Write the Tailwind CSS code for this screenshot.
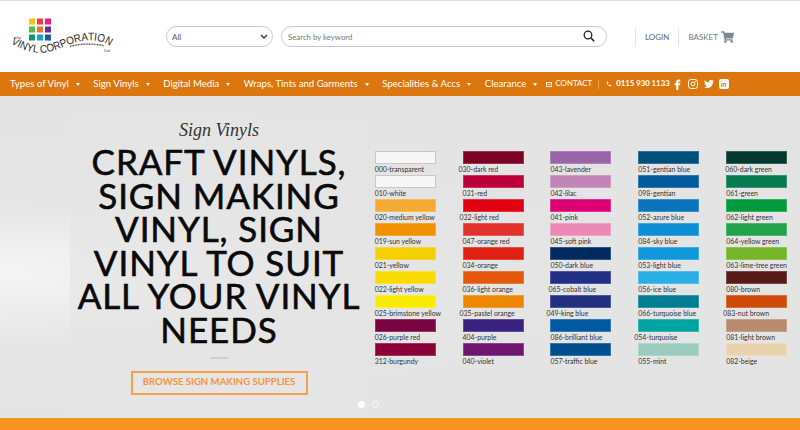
<!DOCTYPE html>
<html lang="en">
<head>
  <meta charset="UTF-8" />
  <title>The Vinyl Corporation</title>
  <script src="https://cdn.jsdelivr.net/npm/@tailwindcss/browser@4"></script>
</head>
<body class="w-[800px] h-[430px] overflow-hidden bg-white font-['Lato',sans-serif]">
  <!-- header -->
  <header class="h-[72px] border-t border-t-[#e2e2e2] flex items-center">
    <svg class="w-[120px] h-[60px] shrink-0" viewBox="0 6.5 120 60">
      <rect x="29" y="18" width="6" height="6" fill="#f5c21b"/><rect x="37" y="18" width="6" height="6" fill="#ee3a43"/><rect x="45" y="18" width="6" height="6" fill="#ec1a7a"/>
      <rect x="29" y="26" width="6" height="6" fill="#5bb947"/><rect x="37" y="26" width="6" height="6" fill="#e8752a"/><rect x="45" y="26" width="6" height="6" fill="#6a2c91"/>
      <rect x="29" y="34" width="6" height="6" fill="#0f9a6d"/><rect x="37" y="34" width="6" height="6" fill="#12a4d8"/><rect x="45" y="34" width="6" height="6" fill="#1c5aa6"/>
      <path id="wave" d="M11 43 C20 48 33 54 46 52 C62 49 72 41 86 40 C98 39 106 42 113 48" fill="none"/>
      <text font-family="Liberation Sans, sans-serif" font-size="11" fill="#2b2b2b"><textPath href="#wave" textLength="104" lengthAdjust="spacingAndGlyphs">VINYL CORPORATION</textPath></text>
      <path d="M70 46 C80 43 92 43 104 45" fill="none" stroke="#555" stroke-width="1.500" stroke-dasharray="1 .6"/>
      <text x="15" y="38" font-family="Liberation Serif, serif" font-style="italic" font-size="5" fill="#444">the</text>
      <text x="104" y="51" font-family="Liberation Serif, serif" font-style="italic" font-size="4.500" fill="#444">Ltd</text>
    </svg>
    <div class="relative ml-[46px] w-[107px]">
      <select class="block appearance-none w-full h-[21px] rounded-full border border-[#c9c9c9] bg-white pl-[5px] text-[8px] text-[#555]"><option>All</option></select>
      <svg class="absolute right-[5px] top-[8px] w-[8px] h-[6px]" viewBox="0 0 8 6"><path d="M1 1l3 3 3-3" fill="none" stroke="#333" stroke-width="1.400"/></svg>
    </div>
    <div class="relative ml-[8px] w-[326px]">
      <input class="block w-full h-[21px] rounded-full border border-[#c9c9c9] bg-white pl-[6px] text-[7.8px] placeholder:text-[#777]" placeholder="Search by keyword" />
      <svg class="absolute right-[12px] top-[4px] w-[12px] h-[12px]" viewBox="0 0 12 12"><circle cx="5" cy="5" r="3.800" fill="none" stroke="#222" stroke-width="1.300"/><path d="M8 8l3.200 3.200" stroke="#222" stroke-width="1.600"/></svg>
    </div>
    <div class="ml-[28px] h-[18px] border-l border-[#e5e5e5] pl-[9px] text-[8px] leading-[18px] text-[#666]">LOGIN</div>
    <div class="ml-[9px] h-[18px] border-l border-[#e5e5e5] pl-[9px] flex items-center text-[8px] text-[#777]">
      BASKET
      <svg class="w-[13px] h-[12px] ml-[3px]" viewBox="0 0 576 512"><path fill="#7d8a90" d="M528 301l47-208c3-15-8-29-23-29H159l-9-45C148 8 138 0 126 0H24C11 0 0 11 0 24v16c0 13 11 24 24 24h70l70 343c-17 10-28 28-28 49 0 31 25 56 56 56s56-25 56-56c0-16-6-30-17-40h210c-11 10-17 24-17 40 0 31 25 56 56 56s56-25 56-56c0-22-13-41-32-50l5-24c3-15-8-29-23-29H213l-7-32h299c11 0 21-8 23-19z"/></svg>
    </div>
  </header>

  <!-- nav -->
  <nav class="h-[24px] bg-[#db770e] flex items-center text-white text-[9.6px] whitespace-nowrap">
    <span class="ml-[10px]">Types of Vinyl</span><span class="ml-[7px] mt-[1px] border-x-[2px] border-t-[3px] border-x-transparent border-t-white"></span>
    <span class="ml-[13.600px]">Sign Vinyls</span><span class="ml-[7px] mt-[1px] border-x-[2px] border-t-[3px] border-x-transparent border-t-white"></span>
    <span class="ml-[13.600px]">Digital Media</span><span class="ml-[7px] mt-[1px] border-x-[2px] border-t-[3px] border-x-transparent border-t-white"></span>
    <span class="ml-[13.600px]">Wraps, Tints and Garments</span><span class="ml-[7px] mt-[1px] border-x-[2px] border-t-[3px] border-x-transparent border-t-white"></span>
    <span class="ml-[13.600px]">Specialities &amp; Accs</span><span class="ml-[7px] mt-[1px] border-x-[2px] border-t-[3px] border-x-transparent border-t-white"></span>
    <span class="ml-[13.600px]">Clearance</span><span class="ml-[7px] mt-[1px] border-x-[2px] border-t-[3px] border-x-transparent border-t-white"></span>
    <svg class="ml-[9px] w-[6px] h-[5px] shrink-0" viewBox="0 0 7 6"><rect x=".5" y=".5" width="6" height="5" fill="none" stroke="#fff"/><path d="M1 1.500l2.500 2 2.500-2" fill="none" stroke="#fff" stroke-width=".8"/></svg>
    <span class="ml-[3px] text-[7.900px]">CONTACT</span>
    <span class="ml-[6px] h-[9px] border-l border-[#e9a25a]"></span>
    <svg class="ml-[7px] w-[6px] h-[6px] shrink-0" viewBox="0 0 24 24"><path fill="#fff" d="M6.6 10.800a15 15 0 0 0 6.600 6.600l2.200-2.200c.3-.3.7-.4 1-.2 1.100.4 2.300.6 3.600.6.600 0 1 .4 1 1V20c0 .6-.4 1-1 1C10.600 21 3 13.400 3 4c0-.6.4-1 1-1h3.500c.6 0 1 .4 1 1 0 1.300.2 2.500.6 3.600.1.300 0 .7-.2 1z"/></svg>
    <span class="ml-[4px] text-[7.800px] font-bold">0115 930 1133</span>
    <svg class="ml-[4px] w-[7px] h-[11px] shrink-0" viewBox="6 3 11 21"><path fill="#fff" d="M14 8h3V4h-3c-2.800 0-5 2.200-5 5v2H6v4h3v9h4v-9h3l1-4h-4V9c0-.6.4-1 1-1z"/></svg>
    <svg class="ml-[7px] w-[10px] h-[10px] shrink-0" viewBox="0 0 11 11"><rect x=".6" y=".6" width="9.800" height="9.800" rx="2.500" fill="none" stroke="#fff" stroke-width="1.100"/><circle cx="5.500" cy="5.500" r="2.100" fill="none" stroke="#fff" stroke-width="1.100"/><circle cx="8.300" cy="2.700" r=".7" fill="#fff"/></svg>
    <svg class="ml-[6px] w-[10px] h-[10px] shrink-0" viewBox="0 0 24 24"><path fill="#fff" d="M23.953 4.57a10 10 0 01-2.825.775 4.958 4.958 0 002.163-2.723c-.951.555-2.005.959-3.127 1.184a4.92 4.92 0 00-8.384 4.482C7.69 8.095 4.067 6.13 1.64 3.162a4.822 4.822 0 00-.666 2.475c0 1.71.87 3.213 2.188 4.096a4.904 4.904 0 01-2.228-.616v.06a4.923 4.923 0 003.946 4.827 4.996 4.996 0 01-2.212.085 4.936 4.936 0 004.604 3.417 9.867 9.867 0 01-6.102 2.105c-.39 0-.779-.023-1.17-.067a13.995 13.995 0 007.557 2.209c9.053 0 13.998-7.496 13.998-13.985 0-.21 0-.42-.015-.63A9.935 9.935 0 0024 4.59z"/></svg>
    <span class="ml-[5px] w-[10px] h-[10px] shrink-0 rounded-[2px] bg-white text-[#db770e] text-[7px] font-bold leading-[10px] text-center">in</span>
  </nav>

  <!-- hero -->
  <main class="relative h-[322px] bg-[radial-gradient(ellipse_at_0%_55%,#f5f5f5_0%,#e5e5e5_30%,#e3e3e3_100%)] flex">
    <section class="ml-[70px] mt-[21px] w-[298px] h-[301px] bg-[#e6e6e6]/70 flex flex-col items-center">
      <div class="mt-[1px] font-['Liberation_Serif',serif] italic text-[18px] leading-[24px] text-[#333]">Sign Vinyls</div>
      <h1 class="mt-[3px] text-[35px] leading-[33.600px] tracking-[0.9px] [-webkit-text-stroke:0.6px_#0a0a0a] text-[#0a0a0a] text-center whitespace-nowrap">CRAFT VINYLS,<br>SIGN MAKING<br>VINYL, SIGN<br>VINYL TO SUIT<br>ALL YOUR VINYL<br>NEEDS</h1>
      <div class="mt-[10px] w-[18px] h-[2px] bg-[#cfcfcf]"></div>
      <a class="mt-[12px] w-[177px] h-[24px] border-2 border-[#f4a24a] flex items-center justify-center text-[9.600px] font-bold text-[#f3963a]">BROWSE SIGN MAKING SUPPLIES</a>
    </section>
    <section class="ml-[6.700px] mt-[55px] grid grid-cols-[repeat(5,61px)] gap-x-[26.900px] auto-rows-[24px] text-[6.900px] leading-[10px] text-[#333] whitespace-nowrap content-start [&>div>div]:h-[13px] [&>div>div]:shadow-[inset_0_0_0_1px_rgb(255_255_255/0.2)]">
      <div><div class="bg-[#f6f6f6] border border-[#c8c8c8]"></div><p>000-transparent</p></div>
      <div><div class="bg-[#7b0323]"></div><p class="-ml-[4px]">030-dark red</p></div>
      <div><div class="bg-[#9a65a6]"></div><p>043-lavender</p></div>
      <div><div class="bg-[#004f7c]"></div><p>051-gentian blue</p></div>
      <div><div class="bg-[#03392e]"></div><p class="-ml-[1px]">060-dark green</p></div>

      <div><div class="bg-[#f6f6f6] border border-[#c8c8c8]"></div><p>010-white</p></div>
      <div><div class="bg-[#bd003c]"></div><p>031-red</p></div>
      <div><div class="bg-[#c285b8]"></div><p>042-lilac</p></div>
      <div><div class="bg-[#005a9c]"></div><p>098-gentian</p></div>
      <div><div class="bg-[#077b50]"></div><p>061-green</p></div>

      <div><div class="bg-[#f4ab34]"></div><p>020-medium yellow</p></div>
      <div><div class="bg-[#e1000f]"></div><p class="-ml-[3px]">032-light red</p></div>
      <div><div class="bg-[#dc0073]"></div><p>041-pink</p></div>
      <div><div class="bg-[#0a75bd]"></div><p>052-azure blue</p></div>
      <div><div class="bg-[#009b3e]"></div><p>062-light green</p></div>

      <div><div class="bg-[#f39200]"></div><p>019-sun yellow</p></div>
      <div><div class="bg-[#e0312c]"></div><p>047-orange red</p></div>
      <div><div class="bg-[#ea8ab5]"></div><p>045-soft pink</p></div>
      <div><div class="bg-[#0d8fd6]"></div><p>084-sky blue</p></div>
      <div><div class="bg-[#22a24a]"></div><p>064-yellow green</p></div>

      <div><div class="bg-[#f6cf00]"></div><p>021-yellow</p></div>
      <div><div class="bg-[#e22012]"></div><p>034-orange</p></div>
      <div><div class="bg-[#002a60]"></div><p>050-dark blue</p></div>
      <div><div class="bg-[#1198dc]"></div><p>053-light blue</p></div>
      <div><div class="bg-[#76b52a]"></div><p>063-lime-tree green</p></div>

      <div><div class="bg-[#f8dc00]"></div><p>022-light yellow</p></div>
      <div><div class="bg-[#e4570c]"></div><p>036-light orange</p></div>
      <div><div class="bg-[#212f86]"></div><p class="-ml-[2px]">065-cobalt blue</p></div>
      <div><div class="bg-[#29aee6]"></div><p>056-ice blue</p></div>
      <div><div class="bg-[#561a18]"></div><p>080-brown</p></div>

      <div><div class="bg-[#f9ec00]"></div><p>025-brimstone yellow</p></div>
      <div><div class="bg-[#ee8700]"></div><p class="-ml-[3px]">035-pastel orange</p></div>
      <div><div class="bg-[#22307f]"></div><p class="-ml-[4px]">049-king blue</p></div>
      <div><div class="bg-[#007d92]"></div><p>066-turquoise blue</p></div>
      <div><div class="bg-[#cd4a08]"></div><p class="-ml-[3px]">083-nut brown</p></div>

      <div><div class="bg-[#7a0342]"></div><p>026-purple red</p></div>
      <div><div class="bg-[#3a2280]"></div><p>404-purple</p></div>
      <div><div class="bg-[#0059a2]"></div><p>086-brilliant blue</p></div>
      <div><div class="bg-[#00a3a1]"></div><p class="-ml-[4px]">054-turquoise</p></div>
      <div><div class="bg-[#b88a70]"></div><p>081-light brown</p></div>

      <div><div class="bg-[#8b0039]"></div><p>312-burgundy</p></div>
      <div><div class="bg-[#6f1770]"></div><p>040-violet</p></div>
      <div><div class="bg-[#00508f]"></div><p>057-traffic blue</p></div>
      <div><div class="bg-[#9acdc0]"></div><p>055-mint</p></div>
      <div><div class="bg-[#e8d3ac]"></div><p>082-beige</p></div>
    </section>
    <div class="absolute left-[358px] top-[305px] flex gap-[7px]">
      <span class="w-[7px] h-[7px] rounded-full bg-white"></span>
      <span class="w-[7px] h-[7px] rounded-full border border-white/80"></span>
    </div>
  </main>
  <div class="h-[12px] bg-[#f7931e]"></div>
</body>
</html>
